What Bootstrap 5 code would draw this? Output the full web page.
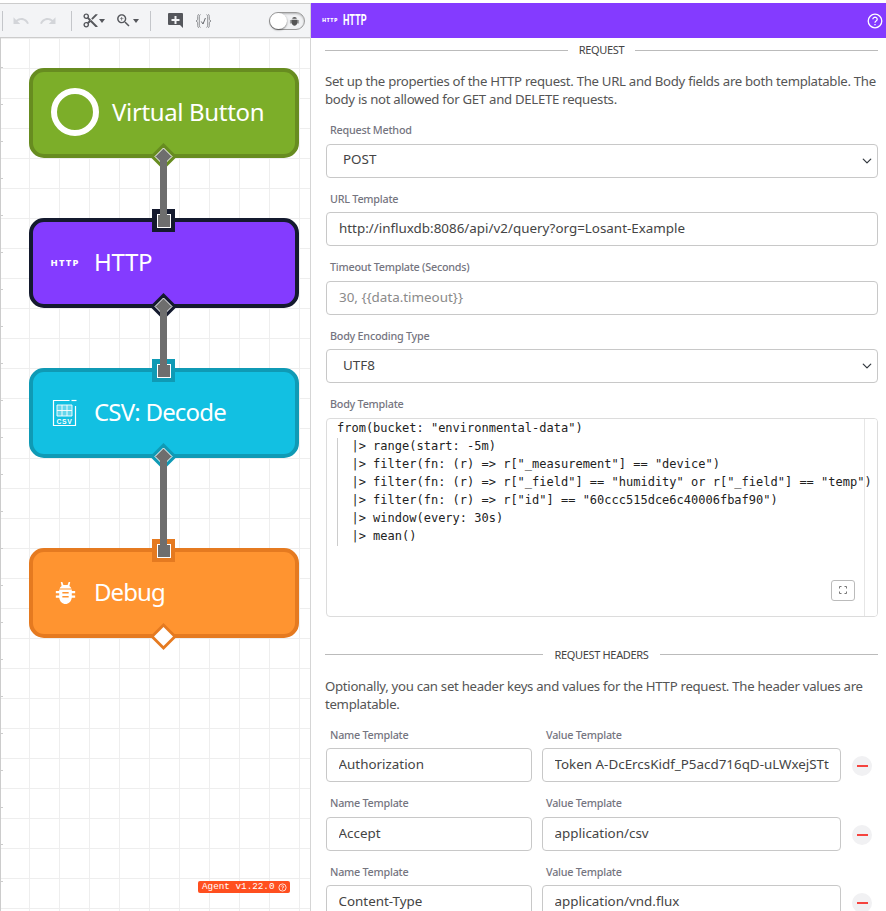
<!DOCTYPE html>
<html lang="en">
<head>
<meta charset="utf-8">
<title>HTTP node</title>
<link href="https://cdn.jsdelivr.net/npm/bootstrap@5.3.0/dist/css/bootstrap.min.css" rel="stylesheet">
<style>
html,body{height:911px;overflow:hidden;background:#fff;font-family:"Noto Sans","Open Sans",sans-serif;color:#444}
.shell{height:911px;padding-top:3px;overflow:hidden}
.left-col{width:311px;flex:none;border-top:1px solid #ccc;border-right:1px solid #d5d5d5;display:flex;flex-direction:column;height:908px}
.tool-strip{height:34px;flex:none;background:#f3f4f6;border-bottom:1px solid #ccc;padding-left:2px;position:relative}
.tool-sep{width:1px;height:20px;background:#c4c6ca;flex:none}
.tool-strip svg{display:block;flex:none;fill:#55575c}
.tool-strip svg.off{fill:#d3d5d9}
.caret-down{width:0;height:0;border-left:3.5px solid transparent;border-right:3.5px solid transparent;border-top:4px solid #55575c;flex:none}
.caret-b{margin-left:1px}
.s1{margin-left:9px}.s2{margin-left:9px}.s3{margin-left:14px}.s4{margin-left:10px}.s5{margin-left:10px}.s6{margin-left:11px}.s7{margin-left:16px}.s8{margin-left:11px}
.bug-switch{position:absolute;left:269px;top:8px;width:36px;height:18px;border-radius:9px;background:#f1f2f4;border:1px solid #9a9a9a;box-shadow:inset 0 1px 2px rgba(0,0,0,.25)}
.bug-switch svg{position:absolute;right:4px;top:3px;fill:#555}
.bug-knob{position:absolute;left:0;top:0;width:17px;height:16px;border-radius:50%;background:#fff;box-shadow:0 1px 2px rgba(0,0,0,.5)}
.flow-canvas{flex:1;position:relative;overflow:hidden;border-left:1px solid #ccc;
 background-color:#fff;
 background-image:linear-gradient(#ccc 1px,transparent 1px),linear-gradient(90deg,#eee 1px,transparent 1px),linear-gradient(#eee 1px,transparent 1px);
 background-size:2px 37px,30px 30px,30px 30px;
 background-repeat:repeat-y,repeat,repeat;
 background-position:0 29px,28px 0,0 0}
.flow-node{position:absolute;left:28px;width:270px;height:90px;border:4px solid;border-radius:15px;display:flex;align-items:center;color:#fff;font-size:24px;padding-bottom:2px;letter-spacing:-.35px}
.n-green{top:30px;background:#7cae29;border-color:#678c20}
.n-purple{top:180px;background:#843bff;border-color:#141a2e}
.n-cyan{top:330px;background:#12c0e2;border-color:#0f9ab5;letter-spacing:-.8px}
.n-orange{top:510px;background:#ff9430;border-color:#e57a20;letter-spacing:-.9px}
.node-slot{width:61px;flex:none;display:flex;justify-content:center;padding-left:4px;padding-right:1px;padding-top:2px}
.slot-wide{width:79px;justify-content:flex-start;padding:0 0 0 18px}
.node-ring{width:48px;height:48px;border:6px solid #fff;border-radius:50%}
.http-mark{font-size:9.5px;font-weight:800;letter-spacing:1.100px;line-height:1}
.wire{position:absolute;left:159px;width:7px;background:#6e6e6e}
.w1{top:118px;height:64px}.w2{top:268px;height:64px}.w3{top:418px;height:94px}
.port-in{position:absolute;left:151px;width:23px;height:23px;display:flex;align-items:center;justify-content:center}
.port-in i{display:block;width:14px;height:14px;background:#6e6e6e;border:1px solid #fff}
.port-out{position:absolute;left:149px;width:27px;height:27px}
.port-out svg{display:block}
.p-a{top:171px;background:#141a2e}.p-b{top:321px;background:#0f9ab5}.p-c{top:501px;background:#e57a20}
.q-a{top:105px}.q-b{top:255px}.q-c{top:405px}.q-d{top:585px}
.agent-tag{position:absolute;left:197px;top:843px;width:92px;height:12px;border-radius:2px;background:#ff4f1f;color:#fff;font:9.3px/12px "Liberation Mono",monospace;padding-left:4px;display:flex;align-items:center;gap:3px}
.agent-tag svg{display:block;flex:none}
.right-col{flex:1;min-width:0;height:908px;overflow:hidden}
.panel-head{height:35px;background:#843bff;color:#fff;padding:0 3px 0 11px;position:relative}
.head-mark{font-size:5.5px;font-weight:800;letter-spacing:.4px;margin-right:5px}
.head-title{display:inline-block;font-family:Roboto,sans-serif;font-size:14px;font-weight:700;transform:scaleX(.65);transform-origin:left center}
.panel-body{padding:0 8px 0 14px}
.sect-rule{font-size:11px;line-height:18px;color:#444;gap:11px;height:24px;letter-spacing:-.33px}
.sect-rule hr{flex:1;margin:0;border-top:1px solid #8d8d8d;opacity:.6}
.intro{font-size:13.2px;line-height:18px;color:#555;margin:10px 0 0;letter-spacing:-.29px}
.fld{margin-bottom:12px}
.fld label{display:block;font-size:10.8px;line-height:18px;height:18px;margin:0 0 4.5px 5px;color:#75757f;font-weight:500;letter-spacing:-.25px}
.fld .form-control,.fld .form-select{height:34px;font-size:13.4px;color:#444;border-color:#c8c8c8;border-radius:4px;padding-top:0;padding-bottom:2px;box-shadow:none;margin-left:1px;width:calc(100% - 1px)}
.fld .form-control{padding-left:12px;padding-right:12px}
.fld .form-select{padding-left:16px;background-position:right 4px center;background-size:12px 10px}
.fld .form-control::placeholder{color:#8a8a8a}
.lead-gap{margin-top:13px}
.code-pane{height:199px;border:1px solid #dcdcdc;border-radius:4px;position:relative;margin-left:1px;margin-bottom:26px;overflow:hidden}
.code-pane pre{margin:0;padding:0 0 0 10px;font:12px/18px "DejaVu Sans Mono",monospace;color:#222;overflow:hidden;white-space:pre;position:relative;z-index:1}
.indent-mark{position:absolute;left:10px;top:19px;height:108px;width:1px;background:#ccc;z-index:2}
.scroll-edge{position:absolute;right:0;top:0;bottom:0;width:13px;background:#fff;border-left:1px solid #e6e6e6}
.expand-btn{position:absolute;left:504px;top:161px;width:24px;height:21px;border:1px solid #bbb;border-radius:3px;background:#fff;display:flex;align-items:center;justify-content:center}
.hdr-row{display:flex;gap:10px;align-items:flex-end}
.hdr-row .fld .form-control{padding-left:11.5px;padding-right:11.5px}
.c-name{width:207px;flex:none}
.c-val{width:300px;flex:none;margin-left:-1px}
.minus-btn{width:20px;height:20px;border-radius:50%;background:#f1f1f3;flex:none;display:flex;align-items:center;justify-content:center;margin:0 0 18px 1px}
.minus-btn i{display:block;width:11px;height:2px;background:#f5443f}
</style>
</head>
<body>
<div class="shell d-flex">
  <div class="left-col">
    <div class="tool-strip d-flex align-items-center">
      <span class="tool-sep"></span>
      <svg class="off s1" width="18" height="18" viewBox="0 0 24 24"><path d="M12.5 8c-2.65 0-5.05.99-6.9 2.6L2 7v9h9l-3.62-3.62c1.39-1.16 3.16-1.88 5.12-1.88 3.54 0 6.55 2.31 7.6 5.5l2.37-.78C21.08 11.03 17.15 8 12.5 8z"/></svg>
      <svg class="off s2" width="18" height="18" viewBox="0 0 24 24"><path d="M18.4 10.6C16.55 8.99 14.15 8 11.5 8c-4.65 0-8.58 3.03-9.96 7.22L3.9 16c1.05-3.19 4.05-5.5 7.6-5.5 1.95 0 3.73.72 5.12 1.88L13 16h9V7l-3.6 3.6z"/></svg>
      <span class="tool-sep s3"></span>
      <svg class="s4" width="17" height="17" viewBox="0 0 24 24"><path d="M9.64 7.64c.23-.5.36-1.05.36-1.64 0-2.21-1.79-4-4-4S2 3.79 2 6s1.79 4 4 4c.59 0 1.14-.13 1.64-.36L10 12l-2.36 2.36C7.14 14.13 6.59 14 6 14c-2.21 0-4 1.79-4 4s1.79 4 4 4 4-1.79 4-4c0-.59-.13-1.14-.36-1.64L12 14l7 7h3v-1L9.64 7.64zM6 8c-1.1 0-2-.89-2-2s.9-2 2-2 2 .89 2 2-.9 2-2 2zm0 12c-1.1 0-2-.89-2-2s.9-2 2-2 2 .89 2 2-.9 2-2 2zm6-7.5c-.28 0-.5-.22-.5-.5s.22-.5.5-.5.5.22.5.5-.22.5-.5.5zM19 3l-6 6 2 2 7-7V3z"/></svg>
      <span class="caret-down"></span>
      <svg class="s5" width="17" height="17" viewBox="0 0 24 24"><path d="M15.5 14h-.79l-.28-.27C15.41 12.59 16 11.11 16 9.5 16 5.91 13.09 3 9.5 3S3 5.91 3 9.5 5.91 16 9.5 16c1.61 0 3.09-.59 4.23-1.57l.27.28v.79l5 4.99L20.49 19l-4.99-5zm-6 0C7.01 14 5 11.99 5 9.5S7.01 5 9.5 5 14 7.01 14 9.5 11.99 14 9.5 14zM12 10h-2v2H9v-2H7V9h2V7h1v2h2v1z"/></svg>
      <span class="caret-down caret-b"></span>
      <span class="tool-sep s6"></span>
      <svg class="s7" width="17" height="17" viewBox="0 0 17 17"><path fill-rule="evenodd" d="M2 1h13a1 1 0 0 1 1 1v14l-3-3H2a1 1 0 0 1-1-1V2a1 1 0 0 1 1-1zm5.500 3v3h-3v2h3v3h2V9h3V7h-3V4z"/></svg>
      <svg class="s8" width="17" height="16" viewBox="0 0 17 16"><g fill="none" stroke="#66686d" stroke-width="1"><path d="M4 1.500C2.500 1.500 2.700 3 2.700 5S2.600 7.500 1 8c1.600.5 1.700 1 1.700 3S2.500 14.500 4 14.500M5.500 1.500C4.500 2 4.300 3 4.300 5v6c0 2 .2 3 1.200 3.500" stroke-width=".7"/><path d="M13 1.500c1.500 0 1.300 1.500 1.300 3.500s.1 2.500 1.700 3c-1.600.5-1.700 1-1.700 3s.2 3.500-1.300 3.500M11.500 1.500c1 .5 1.200 1.500 1.200 3.500v6c0 2-.2 3-1.200 3.500" stroke-width=".7"/><path d="M6.300 8.500l1.700 2.500 2.400-6"/></g></svg>
      <span class="bug-switch"><svg width="11" height="11" viewBox="0 0 12 12"><path d="M3.500 3a2.500 2 0 0 1 5 0zM2.800 4h6.400v1H11v1H9.200v1H11v1H9c-.4 1.600-1.600 2.500-3 2.500S3.400 9.600 3 8H1V7h1.800V6H1V5h1.800z"/></svg><span class="bug-knob"></span></span>
    </div>
    <div class="flow-canvas">
      <div class="flow-node n-green"><span class="node-slot slot-wide"><span class="node-ring"></span></span>Virtual Button</div>
      <div class="flow-node n-purple"><span class="node-slot"><span class="http-mark">HTTP</span></span>HTTP</div>
      <div class="flow-node n-cyan"><span class="node-slot">
        <svg width="26" height="28" viewBox="0 0 26 28" fill="none" stroke="#fff"><path d="M17.500 1.500H1.500v25h22V7" stroke-width="1.200"/><path d="M19.500 1.500h5" stroke-width="1.200"/><path d="M5 6h15v11H5z" fill="#fff" fill-opacity=".35" stroke="none"/><path d="M5 6h15v11H5zM5 11.500h15M10 6v11M15 6v11" stroke-width="1" opacity=".9"/><text x="12.500" y="24.500" text-anchor="middle" font-family="Liberation Sans,sans-serif" font-size="6.800" font-weight="700" letter-spacing=".7" fill="#fff" stroke="none">CSV</text></svg></span>CSV: Decode</div>
      <div class="flow-node n-orange"><span class="node-slot">
        <svg width="21" height="25" viewBox="0 0 20 25" preserveAspectRatio="none"><path fill="#fff" d="M5.500 1h1.500l1 3h4l1-3h1.500l-.8 4c1 .7 1.700 1.500 2 2.500H4.300c.3-1 1-1.800 2-2.500zM4 8.500h12V10h3.200v2.200H16v2.300h3.200v2.200H16c-.5 3.800-3 6.300-6 6.300s-5.500-2.500-6-6.300H.8v-2.200H4v-2.300H.8V10H4z"/><path fill="#ff9430" d="M7 11h6v1.600H7zM7 15h6v1.600H7z"/></svg></span>Debug</div>

      <span class="port-in p-a"><i></i></span>
      <span class="port-in p-b"><i></i></span>
      <span class="port-in p-c"><i></i></span>
      <span class="port-out q-a"><svg width="27" height="27"><path d="M13.500 0L27 13.500 13.500 27 0 13.500z" fill="#678c20"/><path d="M13.500 5L22 13.500 13.500 22 5 13.500z" fill="#6e6e6e" stroke="#fff"/></svg></span>
      <span class="port-out q-b"><svg width="27" height="27"><path d="M13.500 0L27 13.500 13.500 27 0 13.500z" fill="#141a2e"/><path d="M13.500 5L22 13.500 13.500 22 5 13.500z" fill="#6e6e6e" stroke="#fff"/></svg></span>
      <span class="port-out q-c"><svg width="27" height="27"><path d="M13.500 0L27 13.500 13.500 27 0 13.500z" fill="#0f9ab5"/><path d="M13.500 5L22 13.500 13.500 22 5 13.500z" fill="#6e6e6e" stroke="#fff"/></svg></span>
      <span class="port-out q-d"><svg width="27" height="27"><path d="M13.500 0L27 13.500 13.500 27 0 13.500z" fill="#e57a20"/><path d="M13.500 4L23 13.500 13.500 23 4 13.500z" fill="#fff"/></svg></span>

      <span class="wire w1"></span><span class="wire w2"></span><span class="wire w3"></span>

      <div class="agent-tag">Agent v1.22.0<svg width="9" height="9" viewBox="0 0 9 9" fill="none" stroke="#fff" stroke-width=".8"><circle cx="4.500" cy="4.500" r="3.600"/><path d="M3.300 3.500a1.200 1 0 1 1 1.200 1.300V5.500M4.500 6.200v.6"/></svg></div>
    </div>
  </div>

  <div class="right-col">
    <div class="panel-head d-flex align-items-center">
      <span class="head-mark">HTTP</span><span class="head-title">HTTP</span>
      <svg class="ms-auto" width="16" height="16" viewBox="0 0 16 16" fill="none" stroke="#fff" stroke-width="1.300"><circle cx="8" cy="8" r="6.800"/><path d="M5.800 6.200a2.200 2 0 1 1 3.300 1.800c-.8.500-1.100.9-1.100 1.800M8 11v1.300"/></svg>
    </div>
    <div class="panel-body">
      <div class="sect-rule d-flex align-items-center"><hr><span>REQUEST</span><hr></div>
      <p class="intro text-nowrap">Set up the properties of the HTTP request. The URL and Body fields are both templatable. The<br>body is not allowed for GET and DELETE requests.</p>
      <div class="fld lead-gap">
        <label for="m1">Request Method</label>
        <select id="m1" class="form-select"><option>POST</option></select>
      </div>
      <div class="fld">
        <label for="m2">URL Template</label>
        <input id="m2" class="form-control" value="http://influxdb:8086/api/v2/query?org=Losant-Example">
      </div>
      <div class="fld">
        <label for="m3">Timeout Template (Seconds)</label>
        <input id="m3" class="form-control" placeholder="30, {{data.timeout}}">
      </div>
      <div class="fld">
        <label for="m4">Body Encoding Type</label>
        <select id="m4" class="form-select"><option>UTF8</option></select>
      </div>
      <div class="fld mb-0">
        <label>Body Template</label>
      </div>
      <div class="code-pane">
<pre>from(bucket: "environmental-data")
  |&gt; range(start: -5m)
  |&gt; filter(fn: (r) =&gt; r["_measurement"] == "device")
  |&gt; filter(fn: (r) =&gt; r["_field"] == "humidity" or r["_field"] == "temp")
  |&gt; filter(fn: (r) =&gt; r["id"] == "60ccc515dce6c40006fbaf90")
  |&gt; window(every: 30s)
  |&gt; mean()</pre>
        <span class="indent-mark"></span>
        <span class="scroll-edge"></span>
        <span class="expand-btn"><svg width="8" height="8" viewBox="0 0 8 8" fill="none" stroke="#777"><path d="M.5 2.500V.5h2M5.500.5h2v2M7.500 5.500v2h-2M2.500 7.500h-2v-2"/></svg></span>
      </div>
      <div class="sect-rule d-flex align-items-center"><hr><span>REQUEST HEADERS</span><hr></div>
      <p class="intro">Optionally, you can set header keys and values for the HTTP request. The header values are templatable.</p>
      <div class="hdr-row lead-gap">
        <div class="fld c-name"><label for="a1">Name Template</label><input id="a1" class="form-control" value="Authorization"></div>
        <div class="fld c-val"><label for="b1">Value Template</label><input id="b1" class="form-control" value="Token A-DcErcsKidf_P5acd716qD-uLWxejSTtmXq8z0"></div>
        <span class="minus-btn"><i></i></span>
      </div>
      <div class="hdr-row">
        <div class="fld c-name"><label for="a2">Name Template</label><input id="a2" class="form-control" value="Accept"></div>
        <div class="fld c-val"><label for="b2">Value Template</label><input id="b2" class="form-control" value="application/csv"></div>
        <span class="minus-btn"><i></i></span>
      </div>
      <div class="hdr-row">
        <div class="fld c-name"><label for="a3">Name Template</label><input id="a3" class="form-control" value="Content-Type"></div>
        <div class="fld c-val"><label for="b3">Value Template</label><input id="b3" class="form-control" value="application/vnd.flux"></div>
        <span class="minus-btn"><i></i></span>
      </div>
    </div>
  </div>
</div>
<script src="https://cdn.jsdelivr.net/npm/bootstrap@5.3.0/dist/js/bootstrap.bundle.min.js"></script>
</body>
</html>
